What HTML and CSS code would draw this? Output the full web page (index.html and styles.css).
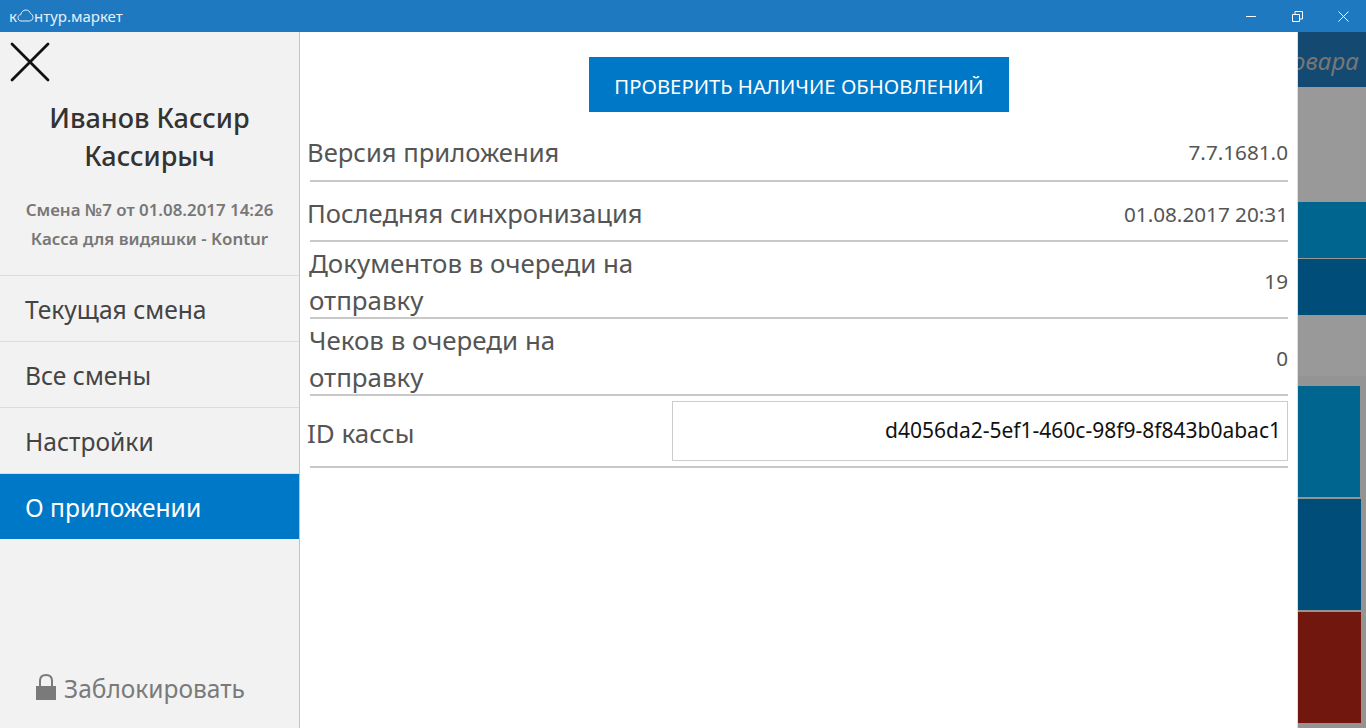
FILE: index.html
```html
<!DOCTYPE html>
<html lang="ru">
<head>
    <meta charset="UTF-8">
    <title>Контур.Маркет</title>
    <link rel="stylesheet" href="styles.css">
</head>
<body>
    <!-- Заголовок окна -->
    <header class="titlebar">
        <div class="logo">к<svg class="logo-cloud" width="17" height="13" viewBox="0 0 17 13"><path d="M1 8.500C1 6.900 2.200 5.800 3.700 5.700 4.400 3 6.200 1 8.800 1c2.600 0 4.200 1.700 4.700 3.600 1.400.6 2.500 2 2.500 3.800 0 2.100-1.700 3.600-3.900 3.600H4C2.200 12 1 10.500 1 8.500z" fill="none" stroke="#e6f0f8" stroke-width="1"/></svg>нтур.маркет</div>
        <div class="window-buttons">
            <svg width="11" height="11" viewBox="0 0 11 11"><path d="M0 5.500H10" stroke="#fff"/></svg>
            <svg width="11" height="11" viewBox="0 0 11 11"><path d="M.5 3.500H7.500V10.500H.5zM3 3.500V.5H10.500V8H7.500" fill="none" stroke="#fff"/></svg>
            <svg width="11" height="11" viewBox="0 0 11 11"><path d="M.5 .5L10.500 10.500M10.500 .5L.5 10.500" stroke="#fff"/></svg>
        </div>
    </header>

    <div class="window">
        <!-- Боковое меню -->
        <aside class="sidebar">
            <button class="close-menu">
                <svg width="40" height="40" viewBox="0 0 40 40"><path d="M2 2L38 38M38 2L2 38" stroke="#111" stroke-width="2.800" stroke-linecap="round"/></svg>
            </button>
            <div class="user-name">Иванов Кассир Кассирыч</div>
            <div class="shift-info">
                <p>Смена №7 от 01.08.2017 14:26</p>
                <p>Касса для видяшки - Kontur</p>
            </div>
            <nav class="menu">
                <a href="#">Текущая смена</a>
                <a href="#">Все смены</a>
                <a href="#">Настройки</a>
                <a href="#" class="active">О приложении</a>
            </nav>
            <div class="lock">
                <svg class="lock-icon" width="20" height="26" viewBox="0 0 20 26"><path d="M0 12H20V26H0z" fill="#7a7a7a"/><path d="M4 13V7C4 3 6.500 1 10 1s6 2 6 6V13" fill="none" stroke="#7a7a7a" stroke-width="2"/></svg>
                <span>Заблокировать</span>
            </div>
        </aside>

        <!-- О приложении -->
        <main class="about">
            <div class="update-row">
                <button class="update-btn">ПРОВЕРИТЬ НАЛИЧИЕ ОБНОВЛЕНИЙ</button>
            </div>
            <div class="info-row row-version">
                <span class="info-label">Версия приложения</span>
                <span class="info-value">7.7.1681.0</span>
            </div>
            <div class="info-row row-sync">
                <span class="info-label">Последняя синхронизация</span>
                <span class="info-value">01.08.2017 20:31</span>
            </div>
            <div class="info-row row-double">
                <span class="info-label wrap">Документов в очереди на отправку</span>
                <span class="info-value">19</span>
            </div>
            <div class="info-row row-double">
                <span class="info-label wrap">Чеков в очереди на отправку</span>
                <span class="info-value">0</span>
            </div>
            <div class="info-row row-id">
                <span class="info-label id-label">ID кассы</span>
                <div class="id-box">d4056da2-5ef1-460c-98f9-8f843b0abac1</div>
            </div>
        </main>

        <!-- Затемнённый экран за меню -->
        <div class="backdrop">
            <div class="search-hint"><span>овара</span></div>
            <div class="gray-block"></div>
            <div class="tile tile-teal small"></div>
            <div class="tile tile-navy small"></div>
            <div class="gray-block second"></div>
            <div class="big-tiles">
                <div class="tile tile-teal narrow"></div>
                <div class="tile tile-navy"></div>
                <div class="tile tile-red"></div>
            </div>
        </div>
    </div>
</body>
</html>
```

FILE: styles.css
```css
/* Общие стили */
* {
    box-sizing: border-box;
}

body {
    margin: 0;
    height: 728px;
    overflow: hidden;
    font-family: 'Noto Sans', 'Open Sans', sans-serif;
    background-color: #fff;
    color: #555;
}

/* Заголовок окна */
.titlebar {
    height: 32px;
    background-color: #1e79c0;
    color: #e6f0f8;
    display: flex;
    justify-content: space-between;
    align-items: center;
}

.logo {
    padding-left: 9px;
    font-size: 15px;
    display: flex;
    align-items: center;
}

.logo-cloud {
    margin-top: -1px;
}

.window-buttons {
    display: flex;
    gap: 35px;
    padding-right: 17px;
}

.window-buttons svg {
    display: block;
}

.window {
    display: flex;
    height: 696px;
}

/* Боковое меню */
.sidebar {
    width: 300px;
    flex: none;
    background-color: #f2f2f2;
    border-right: 1px solid #c4c4c4;
    display: flex;
    flex-direction: column;
}

.close-menu {
    width: 40px;
    height: 40px;
    margin: 10px 0 0 10px;
    padding: 0;
    background: none;
    border: none;
}

.user-name {
    margin: 17px 30px 0;
    font-size: 27px;
    font-weight: 500;
    line-height: 38px;
    text-align: center;
    color: #333;
}

.shift-info {
    margin-top: 20px;
    padding-bottom: 22px;
    border-bottom: 1px solid #dcdcdc;
    font-size: 16.900px;
    font-weight: 600;
    color: #777;
    text-align: center;
}

.shift-info p {
    margin: 0;
    line-height: 29px;
}

.menu a {
    display: block;
    height: 66px;
    padding: 0 25px;
    line-height: 67px;
    font-size: 24.600px;
    color: #444;
    text-decoration: none;
    border-bottom: 1px solid #dcdcdc;
}

.menu a.active {
    height: 65px;
    background-color: #0078c8;
    color: #fff;
    border-bottom: none;
}

.lock {
    margin-top: auto;
    padding: 0 0 23px 36px;
    display: flex;
    align-items: center;
    gap: 8px;
    font-size: 24.500px;
    color: #7a7a7a;
}

.lock-icon {
    margin-top: -4px;
}

/* О приложении */
.about {
    width: 998px;
    flex: none;
    padding: 25px 9px 0 8px;
    border-right: 1px solid #ddd;
}

.update-row {
    display: flex;
    justify-content: center;
    margin-bottom: 6px;
}

.update-btn {
    width: 420px;
    height: 55px;
    margin-left: 2px;
    padding-top: 3px;
    background-color: #0078c8;
    color: #fff;
    border: none;
    font-family: inherit;
    font-size: 20.300px;
}

.info-row {
    display: flex;
    justify-content: space-between;
    align-items: center;
    margin-left: 2px;
    border-bottom: 2px solid #c8c8c8;
    font-size: 25.600px;
}

.info-label {
    margin-left: -3px;
}

.id-label {
    font-size: 26px;
    padding-top: 3px;
}

.info-label.wrap {
    width: 340px;
    font-size: 25.900px;
    line-height: 37px;
    margin-left: -1px;
    padding-top: 1px;
}

.info-value {
    font-size: 20.700px;
}

.row-version {
    height: 64px;
    padding-top: 6px;
}

.row-sync {
    height: 60px;
    padding-top: 5px;
}

.row-double {
    height: 77px;
    padding-top: 3px;
}

.row-id {
    height: 72px;
}

.id-box {
    width: 616px;
    height: 60px;
    border: 1px solid #ccc;
    padding-right: 6px;
    font-size: 21px;
    line-height: 57px;
    color: #111;
    text-align: right;
}

/* Затемнённый экран за меню */
.backdrop {
    flex: 1;
    background-color: #999;
    display: flex;
    flex-direction: column;
}

.search-hint {
    height: 55px;
    flex: none;
    background-color: #144a72;
    color: #777;
    font-size: 24px;
    font-style: italic;
    line-height: 58px;
    overflow: hidden;
    white-space: nowrap;
}

.search-hint span {
    margin-left: -6px;
    display: block;
}

.gray-block {
    height: 115px;
    flex: none;
}

.gray-block.second {
    height: 61px;
}

.big-tiles {
    flex: 1;
    display: flex;
    flex-direction: column;
    gap: 2px;
    padding: 10px 5px 0 0;
    background-color: #949494;
}

.tile {
    height: 111px;
    flex: none;
}

.tile.narrow {
    margin-right: 1px;
}

.tile.small {
    height: 56px;
}

.tile-teal.small {
    margin-bottom: 1px;
}

.tile-teal {
    background-color: #006690;
}

.tile-navy {
    background-color: #004d7a;
}

.tile-red {
    background-color: #72170e;
}
```
